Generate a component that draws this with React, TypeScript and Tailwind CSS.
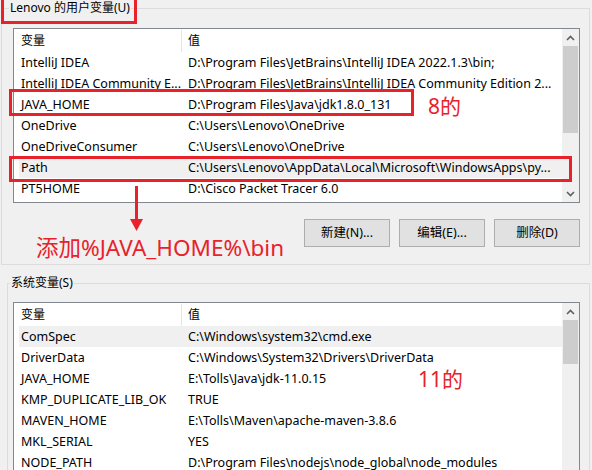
import React from "react";

type Row = { name: string; value: string };

const userRows: Row[] = [
  { name: "IntelliJ IDEA", value: "D:\\Program Files\\JetBrains\\IntelliJ IDEA 2022.1.3\\bin;" },
  { name: "IntelliJ IDEA Community E...", value: "D:\\Program Files\\JetBrains\\IntelliJ IDEA Community Edition 2..." },
  { name: "JAVA_HOME", value: "D:\\Program Files\\Java\\jdk1.8.0_131" },
  { name: "OneDrive", value: "C:\\Users\\Lenovo\\OneDrive" },
  { name: "OneDriveConsumer", value: "C:\\Users\\Lenovo\\OneDrive" },
  { name: "Path", value: "C:\\Users\\Lenovo\\AppData\\Local\\Microsoft\\WindowsApps\\py..." },
  { name: "PT5HOME", value: "D:\\Cisco Packet Tracer 6.0" },
];

const systemRows: Row[] = [
  { name: "ComSpec", value: "C:\\Windows\\system32\\cmd.exe" },
  { name: "DriverData", value: "C:\\Windows\\System32\\Drivers\\DriverData" },
  { name: "JAVA_HOME", value: "E:\\Tolls\\Java\\jdk-11.0.15" },
  { name: "KMP_DUPLICATE_LIB_OK", value: "TRUE" },
  { name: "MAVEN_HOME", value: "E:\\Tolls\\Maven\\apache-maven-3.8.6" },
  { name: "MKL_SERIAL", value: "YES" },
  { name: "NODE_PATH", value: "D:\\Program Files\\nodejs\\node_global\\node_modules" },
];

const Chevron = ({ down }: { down?: boolean }) => (
  <svg width="9" height="6" viewBox="0 0 9 6" className={down ? "rotate-180" : ""}>
    <polyline points="1,5 4.5,1.5 8,5" fill="none" stroke="#606060" strokeWidth="1.6" />
  </svg>
);

interface VarListProps {
  rows: Row[];
  selected: number;
  height: string;
  thumb: string;
}

function VarList({ rows, selected, height, thumb }: VarListProps) {
  return (
    <div className={`flex w-[567px] overflow-hidden border border-[#828790] bg-white ${height}`}>
      <div className="flex-1">
        <div className="flex h-[23px] items-center pt-[1px]">
          <div className="flex h-full w-[168px] items-center border-r border-[#e5e5e5] pl-[7px]">变量</div>
          <div className="pl-[6px]">值</div>
        </div>
        {rows.map((r, i) => (
          <div
            key={r.name + i}
            className={`ml-[5px] flex h-[21px] items-center whitespace-nowrap pt-[2px] text-[12.5px] ${
              i === selected ? "bg-[#f0f0f0]" : ""
            }`}
          >
            <div className="w-[163px] pl-[2px]">{r.name}</div>
            <div className="pl-[6px]">{r.value}</div>
          </div>
        ))}
      </div>
      <div className="flex w-[17px] flex-col bg-[#f0f0f0]">
        <div className="flex h-[17px] items-center justify-center">
          <Chevron />
        </div>
        <div className={`mx-[1px] bg-[#cdcdcd] ${thumb}`} />
        <div className="flex-1" />
        <div className="flex h-[17px] items-center justify-center">
          <Chevron down />
        </div>
      </div>
    </div>
  );
}

const Btn = ({ label }: { label: string }) => (
  <button className="flex h-[28px] w-[86px] shrink-0 items-center justify-center border border-[#adadad] bg-[#e1e1e1] text-[12.5px] text-black">
    {label}
  </button>
);

export default function App() {
  return (
    <div
      className="relative h-[470px] w-[592px] overflow-hidden bg-[#f0f0f0] text-[12px] text-black"
      style={{ fontFamily: '"Noto Sans", "Noto Sans CJK SC", sans-serif' }}
    >
      <div className="pl-[1px] pt-[8px]">
        <div className="relative h-[257px] w-[589px] border border-[#dcdcdc] pl-[11px] pt-[19px]">
          <span className="absolute -top-[10px] left-[7px] bg-[#f0f0f0] px-[1px] leading-[18px]">
            Lenovo 的用户变量(U)
          </span>
          <VarList rows={userRows} selected={5} height="h-[175px]" thumb="h-[87px]" />
          <div className="mt-[16px] flex w-[567px] justify-end gap-[9px]">
            <Btn label="新建(N)..." />
            <Btn label="编辑(E)..." />
            <Btn label="删除(D)" />
          </div>
        </div>
      </div>

      <div className="relative ml-[7px] mt-[18px] h-[200px] w-[583px] border border-[#dcdcdc] pl-[5px] pt-[18px]">
        <span className="absolute -top-[10px] left-[2px] bg-[#f0f0f0] px-[1px] leading-[18px]">系统变量(S)</span>
        <VarList rows={systemRows} selected={0} height="h-[200px]" thumb="h-[44px]" />
      </div>

      {/* red annotations */}
      <div className="absolute left-[1px] top-[-4px] h-[28px] w-[136px] border-[3px] border-[#e8222b]" />
      <div className="absolute left-[9px] top-[89px] h-[27px] w-[405px] border-[3px] border-[#e8222b]" />
      <div className="absolute left-[9px] top-[156px] h-[26px] w-[563px] border-[3px] border-[#e8222b]" />
      <span className="absolute left-[428px] top-[92px] text-[21px] leading-[28px] text-[#e8222b]">8的</span>
      <svg className="absolute left-[128px] top-[184px]" width="17" height="48" viewBox="0 0 17 48">
        <line x1="8.5" y1="2" x2="8.5" y2="38" stroke="#e8222b" strokeWidth="3" />
        <polygon points="2,35 15,35 8.5,47" fill="#e8222b" />
      </svg>
      <span className="absolute left-[36px] top-[233px] text-[22.5px] leading-[30px] text-[#e8222b]">
        添加%JAVA_HOME%\bin
      </span>
      <span className="absolute left-[418px] top-[365px] text-[21px] leading-[28px] text-[#e8222b]">11的</span>
    </div>
  );
}
